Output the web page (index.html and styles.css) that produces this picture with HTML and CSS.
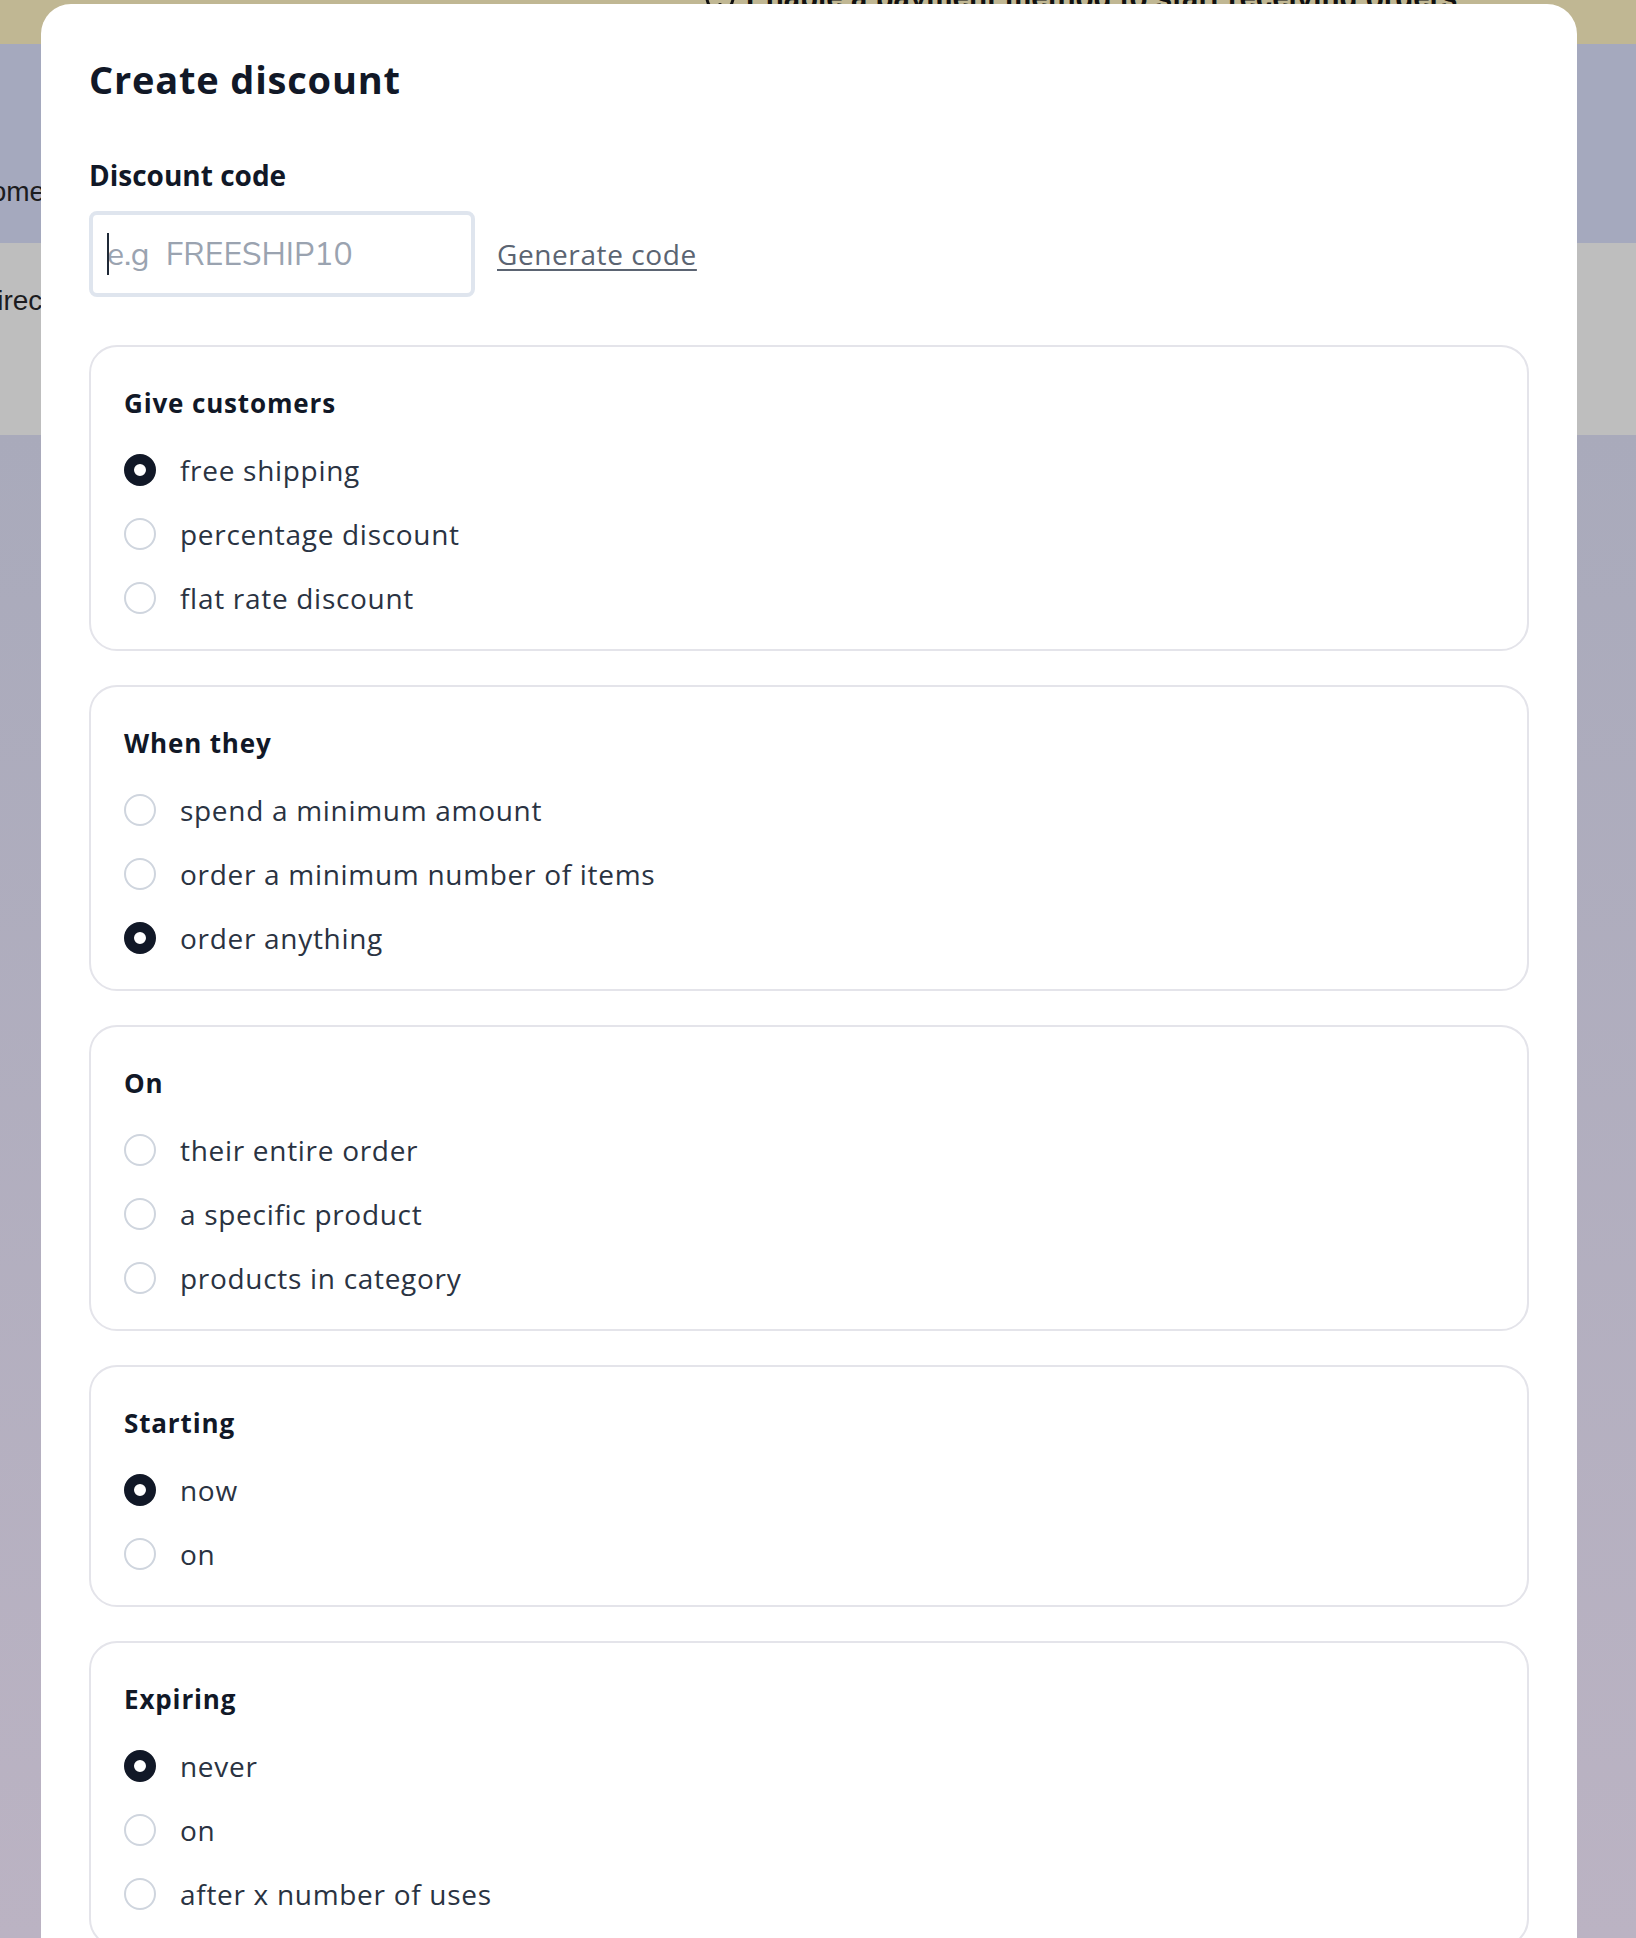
FILE: index.html
```html
<!DOCTYPE html>
<html lang="en">
<head>
    <meta charset="UTF-8">
    <meta name="viewport" content="width=device-width, initial-scale=1.0">
    <title>Create discount</title>
    <link rel="stylesheet" href="styles.css">
</head>
<body>
    <div class="page">
        <div class="banner">
            <span class="banner-text">
                <svg class="banner-icon" viewBox="0 0 32 32" width="32" height="32">
                    <circle cx="16" cy="16" r="13" fill="none" stroke="#111" stroke-width="3"/>
                    <line x1="16" y1="9" x2="16" y2="18" stroke="#111" stroke-width="3"/>
                    <circle cx="16" cy="23" r="2" fill="#111"/>
                </svg>
                Enable a payment method to start receiving orders
            </span>
        </div>
        <div class="band band-top">
            <span class="back-text welcome">Welcome</span>
        </div>
        <div class="band band-gray">
            <span class="back-text direct">Direct debit</span>
        </div>
        <div class="band band-rest"></div>

        <div class="modal">
            <h1 class="modal-title">Create discount</h1>

            <label class="field-label" for="codigo">Discount code</label>
            <div class="code-row">
                <div class="input-wrap">
                    <input type="text" id="codigo" class="code-input" placeholder="e.g  FREESHIP10">
                    <span class="caret"></span>
                </div>
                <a href="#" class="generate">Generate code</a>
            </div>

            <div class="card">
                <div class="card-title">Give customers</div>
                <label class="option"><input type="radio" name="give" checked><span>free shipping</span></label>
                <label class="option"><input type="radio" name="give"><span>percentage discount</span></label>
                <label class="option"><input type="radio" name="give"><span>flat rate discount</span></label>
            </div>

            <div class="card">
                <div class="card-title">When they</div>
                <label class="option"><input type="radio" name="when"><span>spend a minimum amount</span></label>
                <label class="option"><input type="radio" name="when"><span>order a minimum number of items</span></label>
                <label class="option"><input type="radio" name="when" checked><span>order anything</span></label>
            </div>

            <div class="card">
                <div class="card-title">On</div>
                <label class="option"><input type="radio" name="on"><span>their entire order</span></label>
                <label class="option"><input type="radio" name="on"><span>a specific product</span></label>
                <label class="option"><input type="radio" name="on"><span>products in category</span></label>
            </div>

            <div class="card">
                <div class="card-title">Starting</div>
                <label class="option"><input type="radio" name="start" checked><span>now</span></label>
                <label class="option"><input type="radio" name="start"><span>on</span></label>
            </div>

            <div class="card">
                <div class="card-title">Expiring</div>
                <label class="option"><input type="radio" name="expire" checked><span>never</span></label>
                <label class="option"><input type="radio" name="expire"><span>on</span></label>
                <label class="option"><input type="radio" name="expire"><span>after x number of uses</span></label>
            </div>
        </div>
    </div>
</body>
</html>
```

FILE: styles.css
```css
body {
    margin: 0;
    padding: 0;
    font-family: "Open Sans", "Noto Sans", sans-serif;
}
.page {
    position: relative;
    height: 1938px;
    overflow: hidden;
    display: flex;
    flex-direction: column;
}

/* page behind the modal */
.banner {
    height: 44px;
    background-color: #c0b793;
    overflow: hidden;
}
.banner-text {
    display: flex;
    align-items: center;
    gap: 10px;
    margin-top: -20px;
    margin-left: 704px;
    font-family: "Liberation Sans", Arial, sans-serif;
    font-weight: bold;
    font-size: 29.5px;
    line-height: 36px;
    color: #111;
}
.band {
    overflow: hidden;
}
.band-top {
    height: 199px;
    background-color: #a5a9be;
}
.band-gray {
    height: 192px;
    background-color: #bebebe;
}
.band-rest {
    flex: 1;
    background: linear-gradient(#a9aabb, #bbb3c3);
}
.back-text {
    display: block;
    font-family: "Liberation Sans", Arial, sans-serif;
    font-size: 28px;
    line-height: 32px;
    color: #1c1c20;
    white-space: nowrap;
}
.welcome {
    margin-top: 132px;
    margin-left: -71px;
}
.direct {
    margin-top: 42px;
    margin-left: -23px;
}

/* modal */
.modal {
    position: absolute;
    left: 41px;
    top: 4px;
    bottom: -40px;
    width: 1536px;
    box-sizing: border-box;
    padding: 51px 48px 0;
    background-color: #fff;
    border-radius: 30px;
}
.modal-title {
    margin: 0;
    font-size: 38px;
    line-height: 48px;
    font-weight: 700;
    letter-spacing: 0.8px;
    color: #111827;
}
.field-label {
    display: block;
    margin-top: 54px;
    font-size: 28px;
    line-height: 36px;
    font-weight: 700;
    color: #111827;
}
.code-row {
    display: flex;
    align-items: center;
    gap: 22px;
    margin-top: 18px;
}
.input-wrap {
    position: relative;
}
.code-input {
    display: block;
    width: 386px;
    height: 86px;
    box-sizing: border-box;
    padding: 0 14px;
    border: 4px solid #dfe5ee;
    border-radius: 8px;
    font-family: "Nunito Sans", "Noto Sans", sans-serif;
    font-size: 32px;
    color: #111827;
    outline: none;
}
.code-input::placeholder {
    color: #9aa3b0;
}
.caret {
    position: absolute;
    left: 18px;
    top: 22px;
    width: 2px;
    height: 42px;
    background-color: #1f2937;
}
.generate {
    font-size: 28px;
    letter-spacing: 0.6px;
    color: #5b6472;
    text-decoration: underline;
    text-underline-offset: 4px;
}

.card {
    margin-top: 34px;
    padding: 38px 33px 31px;
    border: 2px solid #e4e4ea;
    border-radius: 28px;
    display: flex;
    flex-direction: column;
    gap: 24px;
}
.code-row + .card {
    margin-top: 48px;
}
.card-title {
    font-size: 26px;
    line-height: 36px;
    font-weight: 700;
    letter-spacing: 0.85px;
    color: #111827;
    margin-bottom: 5px;
}
.option {
    display: flex;
    align-items: center;
    gap: 24px;
    height: 40px;
    font-size: 28px;
    letter-spacing: 0.7px;
    color: #2a3342;
}
.option input {
    appearance: none;
    margin: 0;
    width: 32px;
    height: 32px;
    box-sizing: border-box;
    border: 2px solid #cfd5de;
    border-radius: 50%;
    background-color: #fff;
}
.option input:checked {
    border: 10px solid #111827;
}
```
